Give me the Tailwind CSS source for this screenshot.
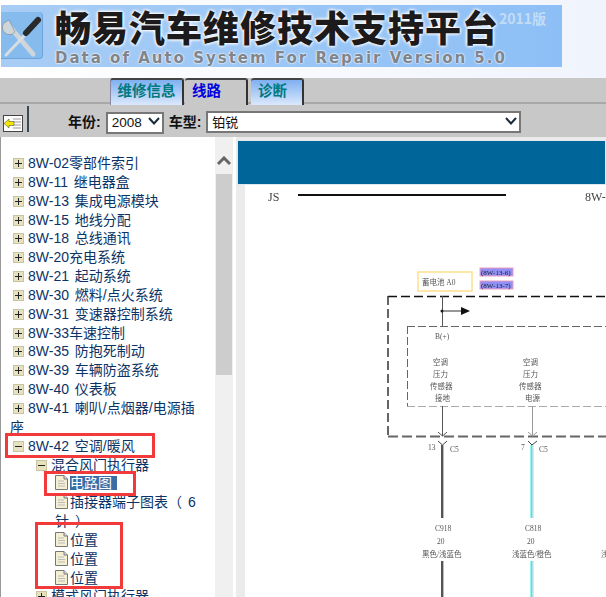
<!DOCTYPE html>
<html lang="zh">
<head>
<meta charset="UTF-8">
<title>畅易汽车维修技术支持平台</title>
<script src="https://cdn.jsdelivr.net/npm/@tailwindcss/browser@4"></script>
</head>
<body class="bg-white overflow-hidden">
<div class="relative w-[606px] h-[597px] overflow-hidden font-['Liberation_Sans','Noto_Sans_CJK_SC',sans-serif]">

  <!-- Banner -->
  <div class="h-[78px] pt-[5px] pl-[1px] bg-gradient-to-r from-white to-[#f0f4fd]">
    <div class="relative flex w-[561px] h-[62px] bg-gradient-to-r from-[#a8cdf5] to-[#8dbff6] overflow-hidden">
      <div class="w-[42px] h-[47px] mt-[7px] shrink-0 rounded-r-sm bg-[#86bbee] border-r border-b border-[#6ea4dc]">
        <svg width="42" height="47" viewBox="0 0 42 47">
          <path d="M9 15 L32 42" stroke="#cfd6db" stroke-width="5" stroke-linecap="round"/>
          <path d="M3 11 A7 7 0 0 0 14 20 L11 14 L8 8 Z" fill="#cfd6db" stroke="#777" stroke-width=".5"/>
          <path d="M24 23 L5 43" stroke="#d8dde0" stroke-width="3" stroke-linecap="round"/>
          <path d="M37 8 L25 21" stroke="#2a2a2a" stroke-width="6" stroke-linecap="round"/>
        </svg>
      </div>
      <div class="ml-[12px]">
        <div class="h-[38px] mt-[2px] text-[36px] leading-[38px] tracking-[1px] font-black whitespace-nowrap text-[#1c1a1a] font-['Noto_Sans_CJK_SC',sans-serif] [text-shadow:0_0_3px_#fff,0_0_3px_#fff,0_0_4px_#fff]">畅易汽车维修技术支持平台</div>
        <div class="mt-[5px] text-[15px] leading-[16px] tracking-[2px] font-bold whitespace-nowrap text-[#7f858c] font-['DejaVu_Sans',sans-serif] [text-shadow:0_0_2px_#fff,0_0_2px_#fff]">Data of Auto System For Repair Version 5.0</div>
      </div>
      <div class="absolute left-[498px] top-[5px] text-[14px] leading-[16px] font-bold text-[#c3dcf5] font-['Noto_Sans_CJK_SC',sans-serif]">2011版</div>
    </div>
  </div>

  <!-- Tabs -->
  <div class="h-[27px] bg-[linear-gradient(to_bottom,#c8c8c8_24px,#a8a8a8_24px,#a8a8a8_26px,#c8c8c8_26px)] pl-[110px] flex items-start">
    <div class="w-[74px] h-[27px] rounded-t-[3px] border-t-2 border-r-2 border-l border-t-[#444] border-r-[#333] border-l-[#88a] bg-gradient-to-b from-[#7fb0f0] to-[#dbe8fb] text-[#007a80] text-[14.5px] leading-[22px] text-center font-bold">维修信息</div>
    <div class="ml-[1px] w-[63px] h-[27px] rounded-t-[3px] border-t-2 border-r-2 border-t-[#444] border-r-[#333] bg-[#c8c8c8] text-[#0000e0] text-[14.5px] leading-[22px] pl-[7px] font-bold">线路</div>
    <div class="ml-[3px] w-[53px] h-[27px] rounded-t-[3px] border-t-2 border-r-2 border-t-[#444] border-r-[#333] bg-gradient-to-b from-[#7fb0f0] to-[#dbe8fb] text-[#007a80] text-[14.5px] leading-[22px] pl-[7px] font-bold">诊断</div>
  </div>

  <!-- Filter row -->
  <div class="h-[32px] bg-[#c8c8c8] flex items-start">
    <div class="ml-[3px] mt-[10px] w-[20px] h-[17px] bg-white border border-[#444]">
      <svg width="18" height="15" viewBox="0 0 18 15">
        <path d="M9 3h8M9 6h8M9 9h8M9 12h8" stroke="#999" stroke-width="1"/>
        <path d="M0 7.5 L5 3 V5.5 H10 V9.5 H5 V12 Z" fill="#f5e800" stroke="#554" stroke-width="0.6"/>
      </svg>
    </div>
    <div class="ml-[4px] mt-[1px] w-[2px] h-[26px] bg-[#3a4a55]"></div>
    <span class="ml-[39px] mt-[8px] text-[14px] leading-[18px] font-bold text-[#111]">年份:</span>
    <div class="relative ml-[5px] mt-[5px] w-[58px] h-[22px]">
      <select class="appearance-none w-full h-full bg-white border-2 border-[#777] pl-[4px] text-[13.5px] leading-[17px] text-[#111] rounded-none"><option>2008</option></select>
      <svg class="absolute right-[4px] top-[7px]" width="12" height="8" viewBox="0 0 12 8"><path d="M1 1 L6 6.5 L11 1" fill="none" stroke="#1a2a3a" stroke-width="2"/></svg>
    </div>
    <span class="ml-[5px] mt-[8px] text-[14px] leading-[18px] font-bold text-[#111]">车型:</span>
    <div class="relative ml-[5px] mt-[5px] w-[315px] h-[22px]">
      <select class="appearance-none w-full h-full bg-white border-2 border-[#777] pl-[4px] text-[13px] leading-[17px] text-[#111] rounded-none font-['Noto_Sans_CJK_SC',sans-serif]"><option>铂锐</option></select>
      <svg class="absolute right-[4px] top-[7px]" width="12" height="8" viewBox="0 0 12 8"><path d="M1 1 L6 6.5 L11 1" fill="none" stroke="#1a2a3a" stroke-width="2"/></svg>
    </div>
  </div>

  <!-- Main -->
  <div class="flex h-[460px] border-l border-[#999]">
    <!-- Tree, filled by the script below -->
    <div id="tree" class="w-[214px] pl-[9px] pt-[17px] text-[14px] leading-[18.85px] [word-spacing:2px] text-[#0b3366] shrink-0 overflow-hidden"></div>

    <!-- Scrollbar -->
    <div class="w-[18px] shrink-0 bg-[#f0f0f0] pt-[19px]">
      <svg class="mx-auto" width="14" height="10" viewBox="0 0 14 10"><path d="M1 8 L7 2 L13 8" fill="none" stroke="#666" stroke-width="3"/></svg>
      <div class="ml-[1px] w-[16px] h-[201px] mt-[8px] bg-[#cdcdcd]"></div>
    </div>

    <!-- Diagram pane -->
    <div class="ml-[3px] flex-1 min-w-0 bg-[#ebebeb] pt-[3px] relative">
      <div class="h-[45px] ml-[1px] bg-[#006699] border-[1px] border-[#dfe8ee]"></div>
      <svg class="block ml-[9px] blur-[0.3px]" width="361" height="412" viewBox="245 185 361 412" font-family="'Liberation Serif','Noto Sans CJK SC',serif">
        <rect x="245" y="185" width="361" height="412" fill="#fff"/>
        <text x="268" y="201" font-size="12" fill="#444">JS</text>
        <path d="M298 195H506" stroke="#111" stroke-width="2"/>
        <text x="585" y="201" font-size="12" fill="#444">8W-4</text>

        <rect x="418" y="272" width="54" height="19" fill="#fff" stroke="#ffdf8c" stroke-width="1.5"/>
        <text x="422" y="285" font-size="7.5" fill="#555">蓄电池 A0</text>
        <rect x="480" y="268" width="33" height="8" fill="#8f8ff5" stroke="#ee9cc0"/>
        <text x="481" y="275" font-size="7" fill="#223">(8W-13-6)</text>
        <rect x="480" y="281" width="33" height="8" fill="#8f8ff5" stroke="#ee9cc0"/>
        <text x="481" y="288" font-size="7" fill="#223">(8W-13-7)</text>

        <path d="M388 296.5H606" stroke="#111" stroke-width="1.5" stroke-dasharray="9 4"/>
        <path d="M388 296V436" stroke="#333" stroke-width="1.5" stroke-dasharray="9 4"/>
        <path d="M388 436.5H606" stroke="#666" stroke-width="2" stroke-dasharray="10 4"/>
        <path d="M407 326.5H606M407.5 326V406" stroke="#666" fill="none" stroke-dasharray="8 3"/>
        <path d="M407 406.5H606" stroke="#aaa" stroke-dasharray="8 3"/>

        <path d="M442.5 296V326" stroke="#555"/>
        <circle cx="442" cy="311" r="1.5" fill="#111"/>
        <path d="M442 311H461" stroke="#333"/>
        <path d="M461 307L470 311L461 315Z" fill="#111"/>
        <text x="435" y="339" font-size="7.5" fill="#555">B(+)</text>

        <g font-size="7.5" fill="#555">
          <text x="433" y="365">空调</text><text x="433" y="377">压力</text><text x="430" y="389">传感器</text><text x="435" y="401">接地</text>
          <text x="523" y="365">空调</text><text x="523" y="377">压力</text><text x="519" y="389">传感器</text><text x="525" y="401">电源</text>
        </g>

        <path d="M442.5 406V436M438 432L442.5 436L447 432" stroke="#555" fill="none"/>
        <path d="M532.5 406V436M528 432L532.5 436L537 432" stroke="#999" fill="none"/>
        <path d="M438 441L442.5 445L447 441M532 445L528 441M532 445L537 441" stroke="#444" fill="none"/>

        <path d="M442 445V518M442 561V597" stroke="#555" stroke-width="2"/>
        <path d="M443.5 445V518M443.5 561V597" stroke="#4ee" stroke-width="1"/>
        <path d="M531.5 445V518M531.5 561V597" stroke="#3ee" stroke-width="2"/>
        <path d="M533 445V518M533 561V597" stroke="#ccc" stroke-width="1"/>

        <g font-size="7.5" fill="#555">
          <text x="428" y="450">13</text><text x="450" y="452">C5</text>
          <text x="521" y="450">7</text><text x="539" y="452">C5</text>
          <text x="435" y="531">C918</text><text x="525" y="531">C818</text>
          <text x="437" y="544">20</text><text x="527" y="544">20</text>
          <text x="422" y="557">黑色/浅蓝色</text><text x="512" y="557">浅蓝色/橙色</text><text x="601" y="557">浅</text>
        </g>
      </svg>
    </div>
  </div>

  <!-- Red annotations drawn over the tree -->
  <div class="absolute left-[5px] top-[433px] w-[150px] h-[25px] border-[3px] border-[#f23a3a]"></div>
  <div class="absolute left-[44px] top-[471px] w-[92px] h-[25px] border-[3px] border-[#f23a3a]"></div>
  <div class="absolute left-[35px] top-[522px] w-[88px] h-[67px] border-[3px] border-[#f23a3a]"></div>
</div>

<script>
  const bar = '<span class="absolute left-[1px] right-[1px] top-[4px] h-[1px] bg-[#222]"></span>'
  const stem = '<span class="absolute top-[1px] bottom-[1px] left-[4px] w-[1px] bg-[#222]"></span>'
  const doc = '<svg class="inline-block align-[-2px] mr-[2px]" width="13" height="15" viewBox="0 0 13 15"><path d="M.5 .5H9L12.5 4V14.5H.5Z" fill="#f3efd0" stroke="#777"/><path d="M9 .5V4H12.5" fill="#ddd" stroke="#777"/><path d="M3 6h6M3 8.5h7M3 11h7" stroke="#bbb"/></svg>'

  function box(open) {
    return '<span class="inline-block w-[11px] h-[11px] mr-[4px] align-[-1px] bg-[#e6e2c0] border border-[#c8c4a0] relative">' + bar + (open ? '' : stem) + '</span>'
  }

  const roots = ['8W-02零部件索引', '8W-11 继电器盒', '8W-13 集成电源模块', '8W-15 地线分配', '8W-18 总线通讯',
    '8W-20充电系统', '8W-21 起动系统', '8W-30 燃料/点火系统', '8W-31 变速器控制系统', '8W-33车速控制',
    '8W-35 防抱死制动', '8W-39 车辆防盗系统', '8W-40 仪表板', '8W-41 喇叭/点烟器/电源插']

  let html = roots.map(t => '<div class="pl-[3px] whitespace-nowrap">' + box(false) + t + '</div>').join('')
  html += '<div>座</div>'
  html += '<div class="pl-[3px]">' + box(true) + '8W-42 空调/暖风</div>'
  html += '<div class="pl-[26px]">' + box(true) + '混合风门执行器</div>'
  html += '<div class="pl-[45px]">' + doc + '<span class="inline-block h-[14px] leading-[14px] bg-[#3a6ea5] text-white pr-[5px]">电路图</span></div>'
  html += '<div class="pl-[45px] whitespace-nowrap">' + doc + '插接器端子图表（ 6<br>针 ）</div>'
  html += '<div class="pl-[45px]">' + doc + '位置</div>'
  html += '<div class="pl-[45px]">' + doc + '位置</div>'
  html += '<div class="pl-[45px]">' + doc + '位置</div>'
  html += '<div class="pl-[26px]">' + box(false) + '模式风门执行器</div>'
  document.getElementById('tree').innerHTML = html
</script>
</body>
</html>
